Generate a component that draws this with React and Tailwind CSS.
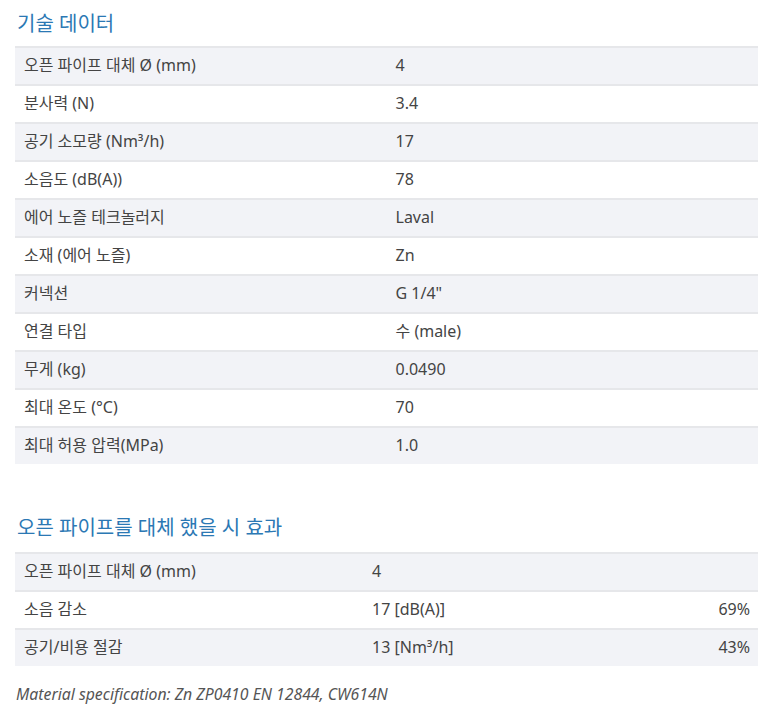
import React from 'react';

const specs = [
  ['오픈 파이프 대체 Ø (mm)', '4'],
  ['분사력 (N)', '3.4'],
  ['공기 소모량 (Nm³/h)', '17'],
  ['소음도 (dB(A))', '78'],
  ['에어 노즐 테크놀러지', 'Laval'],
  ['소재 (에어 노즐)', 'Zn'],
  ['커넥션', 'G 1/4"'],
  ['연결 타입', '수 (male)'],
  ['무게 (kg)', '0.0490'],
  ['최대 온도 (°C)', '70'],
  ['최대 허용 압력(MPa)', '1.0'],
];

const effects = [
  ['오픈 파이프 대체 Ø (mm)', '4', ''],
  ['소음 감소', '17 [dB(A)]', '69%'],
  ['공기/비용 절감', '13 [Nm³/h]', '43%'],
];

export default function App() {
  return (
    <div
      className="w-[782px] h-[720px] bg-white px-[15px] pt-[10px] text-[16px] text-[#444]"
      style={{ fontFamily: '"Noto Sans", "Noto Sans CJK KR", sans-serif' }}
    >
      <h2 className="text-[20px] leading-[28px] text-[#2b78b4] pl-[2px]">기술 데이터</h2>
      <div className="mt-[8px] w-[743px]">
        {specs.map(([label, value], i) => (
          <div
            key={label}
            className={`flex items-center h-[38px] pb-[3px] border-t-2 border-[#e6e7ea] ${i % 2 === 0 ? 'bg-[#f2f3f7]' : 'bg-white'}`}
          >
            <div className="w-1/2 pl-[9px]">{label}</div>
            <div className="w-1/2 pl-[9px]">{value}</div>
          </div>
        ))}
      </div>

      <h2 className="mt-[50px] text-[20px] leading-[28px] text-[#2b78b4] pl-[2px]">오픈 파이프를 대체 했을 시 효과</h2>
      <div className="mt-[10px] w-[743px]">
        {effects.map(([label, value, pct], i) => (
          <div
            key={label}
            className={`flex items-center h-[38px] pb-[3px] border-t-2 border-[#e6e7ea] ${i % 2 === 0 ? 'bg-[#f2f3f7]' : 'bg-white'}`}
          >
            <div className="w-[348px] pl-[9px]">{label}</div>
            <div className="flex-1 pl-[9px]">{value}</div>
            <div className="pr-[8px] text-right">{pct}</div>
          </div>
        ))}
      </div>

      <p className="mt-[18px] leading-[20px] text-[15.8px] italic text-[#555] pl-[1px]">
        Material specification: Zn ZP0410 EN 12844, CW614N
      </p>
    </div>
  );
}
